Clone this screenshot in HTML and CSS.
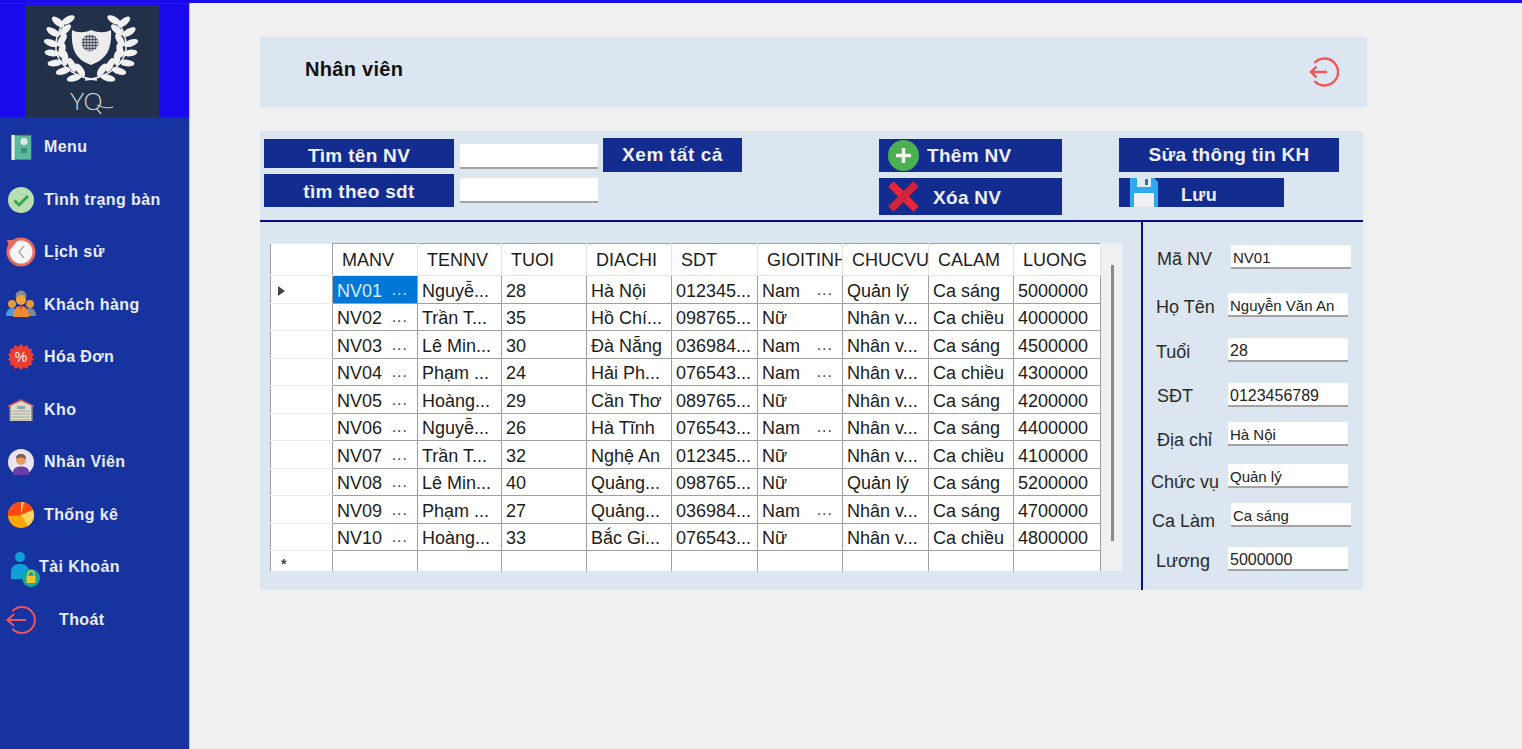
FILE: index.html
```html
<!DOCTYPE html>
<html lang="vi">
<head>
    <meta charset="UTF-8">
    <meta name="viewport" content="width=device-width, initial-scale=1.0">
    <title>Nhân viên</title>
    <link rel="stylesheet" href="styles.css">
</head>
<body>
<div class="app">
    <aside class="sidebar">
        <div class="logo-bar">
            <div class="logo">
                <svg class="wreath" width="134" height="84" viewBox="0 0 134 84">
                    <defs>
                        <ellipse id="leaf" rx="7.5" ry="3.4" fill="#f1f1f1"/>
                        <g id="branch">
                            <use href="#leaf" transform="translate(43 15) rotate(-30)"/>
                            <use href="#leaf" transform="translate(33 17) rotate(39)"/>
                            <use href="#leaf" transform="translate(40 25) rotate(-42)"/>
                            <use href="#leaf" transform="translate(28 27) rotate(32)"/>
                            <use href="#leaf" transform="translate(37 35) rotate(-58)"/>
                            <use href="#leaf" transform="translate(26 38) rotate(20)"/>
                            <use href="#leaf" transform="translate(37 45) rotate(-78)"/>
                            <use href="#leaf" transform="translate(27 48) rotate(8)"/>
                            <use href="#leaf" transform="translate(40 53) rotate(85)"/>
                            <use href="#leaf" transform="translate(30 58) rotate(-8)"/>
                            <use href="#leaf" transform="translate(47 60) rotate(65)"/>
                            <use href="#leaf" transform="translate(38 66) rotate(-18)"/>
                            <use href="#leaf" transform="translate(55 65) rotate(55)"/>
                            <use href="#leaf" transform="translate(49 73) rotate(-14)"/>
                            <path d="M38 18C30 32 28 46 36 57C43 66 54 73 72 75" fill="none" stroke="#f1f1f1" stroke-width="1.5"/>
                        </g>
                        <pattern id="dots" width="3" height="3" patternUnits="userSpaceOnUse">
                            <circle cx="1.5" cy="1.5" r="1.3" fill="#333c4f"/>
                        </pattern>
                    </defs>
                    <use href="#branch"/>
                    <use href="#branch" transform="translate(132 0) scale(-1 1)"/>
                    <path d="M47 25C52 28 60 28 66 25C74 28 80 28 86 25C87 44 82 54 66 60C50 54 46 44 47 25Z" fill="#ececec"/>
                    <circle cx="65" cy="38" r="8.5" fill="url(#dots)"/>
                </svg>
                <div class="logo-name">YQ<svg class="logo-tail" width="16" height="6" viewBox="0 0 16 6"><path d="M0 1C5 3 9 5 16 3" fill="none" stroke="#d8d8d8" stroke-width="1"/></svg></div>
            </div>
        </div>
        <nav class="menu">
            <a class="menu-item">
                <svg class="menu-icon" viewBox="0 0 26 26"><rect x="3.5" y="1" width="20" height="25" rx="1" fill="#5cb99b" stroke="#42505a" stroke-width="1"/><rect x="3.5" y="1" width="3" height="25" fill="#f4f4f4"/><rect x="12.5" y="4" width="7" height="7" rx="3" fill="#dfe6e6"/><rect x="13" y="14" width="6" height="5" fill="#3f8f78"/></svg>
                <span>Menu</span>
            </a>
            <a class="menu-item">
                <svg class="menu-icon" viewBox="0 0 26 26"><circle cx="13" cy="13" r="13" fill="#b9dfb0"/><path d="M6.5 13.5L11 18L20 9" fill="none" stroke="#33a852" stroke-width="3"/></svg>
                <span>Tình trạng bàn</span>
            </a>
            <a class="menu-item">
                <svg class="menu-icon clock" viewBox="0 0 30 30"><circle cx="15" cy="15" r="13" fill="#f7f7f7" stroke="#e86a60" stroke-width="3"/><path d="M18 9L13 15L18 21" fill="none" stroke="#a9aeb8" stroke-width="1.6"/><path d="M1 3L12 3L4 13Z" fill="#e86a60"/></svg>
                <span>Lịch sử</span>
            </a>
            <a class="menu-item">
                <svg class="menu-icon clock" viewBox="0 0 30 30"><circle cx="6" cy="14" r="4" fill="#e39a3c"/><circle cx="24" cy="14" r="4" fill="#e39a3c"/><path d="M0 26C0 20 4 18 6 18C9 18 12 21 12 26Z" fill="#4d9bd8"/><path d="M18 26C18 21 21 18 24 18C26 18 30 20 30 26Z" fill="#7f8a95"/><circle cx="15" cy="6" r="5.5" fill="#8b8b8b"/><circle cx="15" cy="10" r="5" fill="#f2a33a"/><path d="M7 27C7 19 11 16 15 16C19 16 23 19 23 27Z" fill="#ee8b2f"/><path d="M13 16L15 21L17 16Z" fill="#d94c3d"/></svg>
                <span>Khách hàng</span>
            </a>
            <a class="menu-item">
                <svg class="menu-icon" viewBox="0 0 28 28"><path d="M14 0L17 3L21 1L22 5L26 5L25 9L28 11L26 14L28 17L25 19L26 23L22 23L21 27L17 25L14 28L11 25L7 27L6 23L2 23L3 19L0 17L2 14L0 11L3 9L2 5L6 5L7 1L11 3Z" fill="#ea3c2f"/><text class="badge-text" x="14" y="19.500">%</text></svg>
                <span>Hóa Đơn</span>
            </a>
            <a class="menu-item">
                <svg class="menu-icon" viewBox="0 0 26 24"><path d="M13 1L26 7.500V9.500L13 3.500L0 9.500V7.500Z" fill="#c9514f"/><path d="M2 8L13 3L24 8V23H2Z" fill="#dcdccc"/><path d="M2 8V23M24 8V23" stroke="#7d8684" stroke-width="1.500"/><path d="M4 13H22M4 16H22M4 19H22M4 22H22" stroke="#a5a89c" stroke-width="1"/><rect x="9" y="8" width="8" height="3" fill="#8ea8a8"/></svg>
                <span>Kho</span>
            </a>
            <a class="menu-item">
                <svg class="menu-icon" viewBox="0 0 26 26"><circle cx="13" cy="13" r="13" fill="#e7e3f5"/><path d="M5 26V23C5 19 9 17.500 13 17.500C17 17.500 21 19 21 23V26Z" fill="#6a3ea8"/><circle cx="13" cy="11" r="5" fill="#e69b62"/><path d="M8 10C8 6 10 5 13 5C16 5 18 6 18 10C15 8 11 8 8 10Z" fill="#7a5a42"/></svg>
                <span>Nhân Viên</span>
            </a>
            <a class="menu-item">
                <svg class="menu-icon" viewBox="0 0 26 26"><circle cx="13" cy="13" r="13" fill="#ffa600"/><path d="M13 13L0 14A13 13 0 0 1 13 0Z" fill="#fb4a10"/><path d="M13 13L13 0L18 1Z" fill="#ffd35c"/><path d="M13 13L16 .5A13 13 0 0 1 25 8Z" fill="#fb4a10"/><path d="M13 13L25 8A13 13 0 0 1 20 24Z" fill="#ffd35c"/></svg>
                <span>Thống kê</span>
            </a>
            <a class="menu-item item-account">
                <svg class="menu-icon account" viewBox="0 0 30 36"><circle cx="10" cy="6" r="5" fill="#0f9fd8"/><path d="M1 28V21C1 15 5 13 10 13C15 13 18 15 19 19L15 28Z" fill="#0f9fd8"/><circle cx="21" cy="27" r="9" fill="#12a99a"/><rect x="16.500" y="25" width="9" height="7" fill="#f0c330"/><path d="M18 25V23A3 3 0 0 1 24 23V25" fill="none" stroke="#f0c330" stroke-width="1.500"/></svg>
                <span>Tài Khoản</span>
            </a>
            <a class="menu-item item-exit">
                <svg class="menu-icon clock" viewBox="0 0 30 30"><path d="M6.500 6A13 13 0 1 1 6.500 24" fill="none" stroke="#e9565c" stroke-width="2"/><path d="M20 15H1.500M8 9L1.500 15L8 21" fill="none" stroke="#e9565c" stroke-width="2"/></svg>
                <span>Thoát</span>
            </a>
        </nav>
    </aside>

    <main class="content">
        <header class="page-head">
            <h1>Nhân viên</h1>
            <svg class="exit-icon" width="30" height="30" viewBox="0 0 30 30"><path d="M5.500 6A13.500 13.500 0 1 1 5.500 24" fill="none" stroke="#f2555a" stroke-width="2.400"/><path d="M18 15H2M7.500 9.500L2 15L7.500 20.500" fill="none" stroke="#f2555a" stroke-width="2.400"/></svg>
        </header>

        <section class="panel">
            <div class="toolbar">
                <div class="tool-col col-search">
                    <button class="btn btn-name">Tìm tên NV</button>
                    <button class="btn btn-phone">tìm theo sdt</button>
                </div>
                <div class="tool-col col-inputs">
                    <input class="text-box search-box" type="text">
                    <input class="text-box search-box" type="text">
                </div>
                <div class="tool-col col-all">
                    <button class="btn btn-all">Xem tất cả</button>
                </div>
                <div class="tool-col col-edit">
                    <button class="btn btn-add">
                        <svg width="31" height="31" viewBox="0 0 31 31"><circle cx="15.500" cy="15.500" r="15.500" fill="#4caf50"/><path d="M15.500 8V23M8 15.500H23" stroke="#f2f7f2" stroke-width="3.500"/></svg>
                        <span>Thêm NV</span>
                    </button>
                    <button class="btn btn-delete">
                        <svg width="31" height="31" viewBox="0 0 31 31"><path d="M3 3L28 28" stroke="#e8273a" stroke-width="7.500"/><path d="M28 3L3 28" stroke="#d1233a" stroke-width="7.500"/></svg>
                        <span>Xóa NV</span>
                    </button>
                </div>
                <div class="tool-col col-save">
                    <button class="btn btn-update">Sửa thông tin KH</button>
                    <button class="btn btn-save">
                        <svg width="28" height="29" viewBox="0 0 28 29"><path d="M0 0H24L28 4V29H0Z" fill="#2fa9ee"/><rect x="7" y="0" width="14" height="9" fill="#dfeaf2"/><rect x="15" y="1" width="3" height="6" fill="#2f6f9f"/><rect x="4" y="15" width="20" height="14" fill="#eef0f2"/></svg>
                        <span>Lưu</span>
                    </button>
                </div>
            </div>

            <div class="panel-body">
                <div class="grid-wrap">
                    <div class="grid-view">
                        <table class="data-grid">
                            <thead>
                                <tr><th class="row-head"></th><th>MANV</th><th>TENNV</th><th>TUOI</th><th>DIACHI</th><th>SDT</th><th>GIOITINH</th><th>CHUCVU</th><th>CALAM</th><th>LUONG</th></tr>
                            </thead>
                            <tbody>
                                <tr><td class="row-head"><i class="row-arrow"></i></td><td class="selected">NV01<em>...</em></td><td>Nguyễ...</td><td>28</td><td>Hà Nội</td><td>012345...</td><td>Nam<em>...</em></td><td>Quản lý</td><td>Ca sáng</td><td>5000000</td></tr>
                                <tr><td class="row-head"></td><td>NV02<em>...</em></td><td>Trần T...</td><td>35</td><td>Hồ Chí...</td><td>098765...</td><td>Nữ</td><td>Nhân v...</td><td>Ca chiều</td><td>4000000</td></tr>
                                <tr><td class="row-head"></td><td>NV03<em>...</em></td><td>Lê Min...</td><td>30</td><td>Đà Nẵng</td><td>036984...</td><td>Nam<em>...</em></td><td>Nhân v...</td><td>Ca sáng</td><td>4500000</td></tr>
                                <tr><td class="row-head"></td><td>NV04<em>...</em></td><td>Phạm ...</td><td>24</td><td>Hải Ph...</td><td>076543...</td><td>Nam<em>...</em></td><td>Nhân v...</td><td>Ca chiều</td><td>4300000</td></tr>
                                <tr><td class="row-head"></td><td>NV05<em>...</em></td><td>Hoàng...</td><td>29</td><td>Cần Thơ</td><td>089765...</td><td>Nữ</td><td>Nhân v...</td><td>Ca sáng</td><td>4200000</td></tr>
                                <tr><td class="row-head"></td><td>NV06<em>...</em></td><td>Nguyễ...</td><td>26</td><td>Hà Tĩnh</td><td>076543...</td><td>Nam<em>...</em></td><td>Nhân v...</td><td>Ca sáng</td><td>4400000</td></tr>
                                <tr><td class="row-head"></td><td>NV07<em>...</em></td><td>Trần T...</td><td>32</td><td>Nghệ An</td><td>012345...</td><td>Nữ</td><td>Nhân v...</td><td>Ca chiều</td><td>4100000</td></tr>
                                <tr><td class="row-head"></td><td>NV08<em>...</em></td><td>Lê Min...</td><td>40</td><td>Quảng...</td><td>098765...</td><td>Nữ</td><td>Quản lý</td><td>Ca sáng</td><td>5200000</td></tr>
                                <tr><td class="row-head"></td><td>NV09<em>...</em></td><td>Phạm ...</td><td>27</td><td>Quảng...</td><td>036984...</td><td>Nam<em>...</em></td><td>Nhân v...</td><td>Ca sáng</td><td>4700000</td></tr>
                                <tr><td class="row-head"></td><td>NV10<em>...</em></td><td>Hoàng...</td><td>33</td><td>Bắc Gi...</td><td>076543...</td><td>Nữ</td><td>Nhân v...</td><td>Ca chiều</td><td>4800000</td></tr>
                                <tr><td class="row-head new-row">*</td><td></td><td></td><td></td><td></td><td></td><td></td><td></td><td></td><td></td></tr>
                            </tbody>
                        </table>
                        <div class="scroll-thumb"></div>
                    </div>
                </div>

                <form class="detail">
                    <div class="field f-ma"><label>Mã NV</label><input class="text-box" type="text" value="NV01"></div>
                    <div class="field f-ten"><label>Họ Tên</label><input class="text-box" type="text" value="Nguyễn Văn An"></div>
                    <div class="field f-tuoi"><label>Tuổi</label><input class="text-box big" type="text" value="28"></div>
                    <div class="field f-sdt"><label>SĐT</label><input class="text-box big" type="text" value="0123456789"></div>
                    <div class="field f-diachi"><label>Địa chỉ</label><input class="text-box" type="text" value="Hà Nội"></div>
                    <div class="field f-chucvu"><label>Chức vụ</label><input class="text-box" type="text" value="Quản lý"></div>
                    <div class="field f-calam"><label>Ca Làm</label><input class="text-box" type="text" value="Ca sáng"></div>
                    <div class="field f-luong"><label>Lương</label><input class="text-box big" type="text" value="5000000"></div>
                </form>
            </div>
        </section>
    </main>
</div>
</body>
</html>
```

FILE: styles.css
```css
* {
    box-sizing: border-box;
}
html, body {
    margin: 0;
    height: 100%;
    overflow: hidden;
}
body {
    font-family: "Liberation Sans", Arial, sans-serif;
    background-color: #f0f0f0;
    color: #1c1c1c;
}
.app {
    display: flex;
    height: 749px;
    border-top: 3px solid #1a0bef;
}

/* sidebar */
.sidebar {
    width: 190px;
    flex-shrink: 0;
    background-color: #17339f;
    border-right: 1px solid #b8c4e4;
    border-top: 1px solid #17339f;
}
.logo-bar {
    height: 113px;
    background-color: #1a0bef;
    padding: 1px 0 0 25px;
}
.logo {
    width: 134px;
    height: 112px;
    background-color: #22304a;
}
.wreath {
    display: block;
}
.logo-name {
    position: relative;
    width: 44px;
    margin: 0 0 0 45px;
    font-family: Lato, "Liberation Sans", sans-serif;
    font-weight: 300;
    font-size: 24px;
    line-height: 24px;
    color: #d8d8d8;
}
.logo-tail {
    position: absolute;
    left: 27px;
    top: 15px;
}
.menu {
    display: flex;
    flex-direction: column;
    padding-top: 4px;
}
.menu-item {
    display: flex;
    align-items: center;
    height: 52.5px;
    padding-left: 8px;
    color: #e8ecfb;
    font-size: 16px;
    font-weight: bold;
    letter-spacing: 0.4px;
}
.menu-icon {
    width: 26px;
    height: 26px;
    margin-right: 10px;
    flex-shrink: 0;
}
.menu-icon.clock {
    width: 30px;
    height: 30px;
    margin-left: -2px;
    margin-right: 8px;
}
.menu-icon.account {
    width: 30px;
    height: 36px;
    margin-left: 2px;
    margin-right: -1px;
    margin-top: 4px;
}
.item-exit span {
    margin-left: 15px;
}
.badge-text {
    font-size: 15px;
    fill: #fff;
    text-anchor: middle;
    font-weight: normal;
    letter-spacing: 0;
}

/* main area */
.content {
    flex: 1;
    padding: 34px 0 0 70px;
}
.page-head {
    display: flex;
    justify-content: space-between;
    align-items: center;
    width: 1107px;
    height: 70px;
    padding: 0 28px 0 45px;
    background-color: #dce6f0;
}
.page-head h1 {
    margin: -6px 0 0;
    font-size: 20px;
    letter-spacing: 0.3px;
    color: #111;
}
.exit-icon {
    display: block;
}
.panel {
    width: 1103px;
    height: 459px;
    margin-top: 24px;
    background-color: #dce6f0;
}

/* toolbar */
.toolbar {
    display: flex;
    height: 91px;
    border-bottom: 2px solid #0a0a8c;
}
.tool-col {
    display: flex;
    flex-direction: column;
}
.btn {
    display: flex;
    align-items: center;
    justify-content: center;
    width: 100%;
    padding: 0;
    border: none;
    background-color: #132c8f;
    color: #eef1fb;
    font-family: inherit;
    font-size: 19px;
    font-weight: bold;
    letter-spacing: 0.3px;
    overflow: hidden;
}
.col-search {
    width: 190px;
    margin-left: 4px;
    padding-top: 8px;
}
.btn-name {
    height: 29px;
    padding-top: 5px;
}
.btn-phone {
    height: 33px;
    margin-top: 6px;
    padding-top: 2px;
}
.col-inputs {
    width: 138px;
    margin-left: 6px;
    padding-top: 13px;
    gap: 9px;
}
.col-all {
    width: 139px;
    margin-left: 5px;
    padding-top: 7px;
}
.btn-all {
    height: 34px;
    letter-spacing: 0.6px;
}
.col-edit {
    width: 183px;
    margin-left: 137px;
    padding-top: 8px;
    gap: 6px;
}
.btn-add {
    height: 33px;
    justify-content: flex-start;
    padding-left: 9px;
}
.btn-add span {
    margin-left: 8px;
}
.btn-delete {
    height: 37px;
    justify-content: flex-start;
    padding-left: 9px;
}
.btn-delete span {
    margin-left: 14px;
    padding-top: 2px;
}
.col-save {
    width: 220px;
    margin-left: 57px;
    padding-top: 7px;
    gap: 6px;
}
.btn-update {
    height: 34px;
}
.btn-save {
    width: 165px;
    height: 29px;
    justify-content: flex-start;
    padding-left: 11px;
    font-size: 18px;
}
.btn-save span {
    margin-left: 23px;
    padding-top: 6px;
}

/* grid */
.panel-body {
    display: flex;
    height: 368px;
}
.grid-wrap {
    width: 883px;
    padding: 21px 0 0 10px;
    border-right: 2px solid #0a0a8c;
}
.grid-view {
    position: relative;
    width: 852px;
    height: 328px;
    background-color: #f0f0f0;
    overflow: hidden;
}
.data-grid {
    width: 830px;
    table-layout: fixed;
    border-collapse: collapse;
    background-color: #fff;
    font-size: 18px;
}
.data-grid th {
    height: 32px;
    padding: 2px 0 0 9px;
    font-weight: normal;
    text-align: left;
    white-space: nowrap;
    overflow: hidden;
    border: 1px solid #e4e4e4;
    border-top: 1px solid #a0a0a0;
}
.data-grid th:nth-child(1) { width: 62px; }
.data-grid th:nth-child(2) { width: 85px; }
.data-grid th:nth-child(3) { width: 84px; }
.data-grid th:nth-child(4) { width: 85px; }
.data-grid th:nth-child(5) { width: 85px; }
.data-grid th:nth-child(6) { width: 86px; }
.data-grid th:nth-child(7) { width: 85px; }
.data-grid th:nth-child(8) { width: 86px; }
.data-grid th:nth-child(9) { width: 85px; }
.data-grid th:nth-child(10) { width: 87px; }
.data-grid td {
    height: 27.5px;
    padding: 4px 0 0 4px;
    white-space: nowrap;
    overflow: hidden;
    border: 1px solid #a0a0a0;
}
.data-grid th:first-child,
.data-grid td:first-child {
    border-left: 1px solid #a0a0a0;
}
.data-grid .row-head {
    border-top: 1px solid #ececec;
    border-bottom: 1px solid #ececec;
    border-right: 1px solid #a0a0a0;
}
.data-grid em {
    float: right;
    margin-right: 9px;
    font-style: normal;
    font-size: 16px;
    letter-spacing: 1px;
    color: #444;
}
.data-grid .selected {
    background-color: #0078d7;
    color: #dcecfb;
}
.data-grid .selected em {
    color: #dcecfb;
}
.row-arrow {
    display: block;
    width: 0;
    height: 0;
    margin-left: 3px;
    border-left: 7px solid #444;
    border-top: 5px solid transparent;
    border-bottom: 5px solid transparent;
}
.data-grid .new-row {
    padding: 7px 0 0 10px;
    vertical-align: top;
    line-height: 13px;
    font-size: 14px;
    font-weight: bold;
    color: #444;
}
.scroll-thumb {
    position: absolute;
    left: 841px;
    top: 22px;
    width: 3px;
    height: 276px;
    background-color: #8a8a8a;
}

/* detail form */
.detail {
    flex: 1;
    padding: 23px 0 0 8px;
}
.field {
    display: flex;
    align-items: center;
    height: 24px;
    font-size: 18px;
    color: #2a2a2a;
}
.field label {
    width: 77px;
    flex-shrink: 0;
}
.text-box {
    display: block;
    width: 120px;
    height: 24px;
    padding: 3px 2px 0;
    border: none;
    border-bottom: 2px solid #a3a3a3;
    border-radius: 0;
    outline: none;
    background-color: #fff;
    color: #222;
    font-family: inherit;
    font-size: 15px;
}
.search-box {
    width: 100%;
    height: 25px;
}
.text-box.big {
    padding-top: 4px;
    font-size: 16px;
}
.f-ma label { padding: 4px 0 0 6px; }
.f-ma .text-box { margin-left: 3px; padding-left: 2px; }
.f-ten { margin-top: 24px; }
.f-ten label { padding: 4px 0 0 5px; }
.f-tuoi { margin-top: 21px; }
.f-tuoi label { padding: 4px 0 0 5px; }
.f-sdt { margin-top: 21px; }
.f-sdt label { padding: 2px 0 0 6px; }
.f-diachi { margin-top: 15px; }
.f-diachi label { padding: 12px 0 0 6px; }
.f-chucvu { margin-top: 18px; }
.f-chucvu label { padding-top: 12px; }
.f-calam { margin-top: 15px; }
.f-calam label { padding: 13px 0 0 1px; }
.f-calam .text-box { margin-left: 3px; }
.f-luong { margin-top: 20px; }
.f-luong label { padding: 4px 0 0 5px; }
```
